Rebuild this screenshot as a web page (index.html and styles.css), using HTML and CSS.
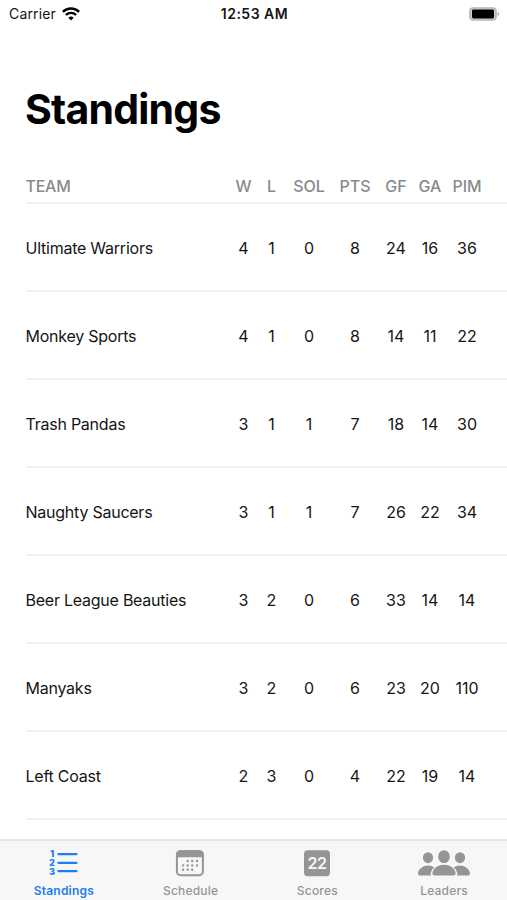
FILE: index.html
```html
<!DOCTYPE html>
<html lang="en">
<head>
    <meta charset="UTF-8">
    <title>Standings</title>
    <link rel="stylesheet" href="styles.css">
</head>
<body>
    <div class="status-bar">
        <div class="carrier">
            <span class="carrier-name">Carrier</span>
            <svg class="wifi" width="18" height="14" viewBox="0 0 18 14" fill="none" stroke="#000" stroke-width="2.4">
                <path d="M0.9 4.8a11.6 11.6 0 0 1 16.2 0"/>
                <path d="M3.9 8a7.3 7.3 0 0 1 10.2 0"/>
                <path d="M9 13.4l-2.6-2.7a3.7 3.7 0 0 1 5.2 0z" fill="#000" stroke="none"/>
            </svg>
        </div>
        <div class="time">12:53 AM</div>
        <div class="battery">
            <svg width="31" height="14" viewBox="0 0 31 14">
                <rect x="0.9" y="0.9" width="26.2" height="12.2" rx="3.4" fill="#ccc" stroke="#b4b4b4" stroke-width="1.4"/>
                <rect x="3" y="2.5" width="22" height="9" rx="1.4" fill="#000"/>
                <path d="M28.6 4.8c2.2.8 2.2 3.6 0 4.4z" fill="#b0b0b0"/>
            </svg>
        </div>
    </div>

    <h1>Standings</h1>

    <div class="standings">
        <div class="row header">
            <span class="team">TEAM</span><span>W</span><span>L</span><span>SOL</span><span>PTS</span><span>GF</span><span>GA</span><span>PIM</span>
        </div>
        <div class="row">
            <span class="team">Ultimate Warriors</span><span>4</span><span>1</span><span>0</span><span>8</span><span>24</span><span>16</span><span>36</span>
        </div>
        <div class="row">
            <span class="team">Monkey Sports</span><span>4</span><span>1</span><span>0</span><span>8</span><span>14</span><span>11</span><span>22</span>
        </div>
        <div class="row">
            <span class="team">Trash Pandas</span><span>3</span><span>1</span><span>1</span><span>7</span><span>18</span><span>14</span><span>30</span>
        </div>
        <div class="row">
            <span class="team">Naughty Saucers</span><span>3</span><span>1</span><span>1</span><span>7</span><span>26</span><span>22</span><span>34</span>
        </div>
        <div class="row">
            <span class="team">Beer League Beauties</span><span>3</span><span>2</span><span>0</span><span>6</span><span>33</span><span>14</span><span>14</span>
        </div>
        <div class="row">
            <span class="team">Manyaks</span><span>3</span><span>2</span><span>0</span><span>6</span><span>23</span><span>20</span><span>110</span>
        </div>
        <div class="row">
            <span class="team">Left Coast</span><span>2</span><span>3</span><span>0</span><span>4</span><span>22</span><span>19</span><span>14</span>
        </div>
    </div>

    <nav class="tab-bar">
        <a class="tab active">
            <svg width="30" height="28" viewBox="0 0 30 28">
                <path d="M10.4 4.2h18M10.4 12.8h18M10.4 21.2h18" stroke="currentColor" stroke-width="2.3" stroke-linecap="round"/>
                <g class="list-number">
                    <text x="4.2" y="7.3">1</text>
                    <text x="4.2" y="15.9">2</text>
                    <text x="4.2" y="24.5">3</text>
                </g>
            </svg>
            <span>Standings</span>
        </a>
        <a class="tab">
            <svg width="30" height="28" viewBox="0 0 30 28">
                <rect x="1.9" y="1.2" width="26" height="24" rx="3.6" fill="none" stroke="currentColor" stroke-width="2"/>
                <path d="M1 7.2V4.4A4.2 4.2 0 0 1 5.2.2h19.4a4.2 4.2 0 0 1 4.200 4.200v2.800z" fill="currentColor"/>
                <g stroke="currentColor" stroke-width="2.4" stroke-linecap="round">
                    <path d="M12.7 11h.01M17.2 11h.01M22 11h.01"/>
                    <path d="M8.1 15.4h.01M12.7 15.4h.01M17.2 15.4h.01M22 15.4h.01"/>
                    <path d="M8.1 19.8h.01M12.7 19.8h.01M17.2 19.8h.01"/>
                </g>
            </svg>
            <span>Schedule</span>
        </a>
        <a class="tab">
            <svg width="28" height="28" viewBox="0 0 28 28">
                <rect x="1" y="0.2" width="26" height="26" rx="3.6" fill="currentColor"/>
                <text class="score-number" x="14" y="19">22</text>
            </svg>
            <span>Scores</span>
        </a>
        <a class="tab">
            <svg width="54" height="28" viewBox="0 0 54 28" fill="currentColor">
                <ellipse cx="11" cy="7.7" rx="5.1" ry="5.5"/>
                <ellipse cx="43" cy="7.7" rx="5.1" ry="5.5"/>
                <ellipse cx="27" cy="6.6" rx="5.8" ry="6.400"/>
                <path d="M3 25.4c-1.400 0-2-.8-2-2 0-3.400 4-8 10-8 2.600 0 4.700.8 6.300 2-2.400 2-3.900 4.600-3.600 8z"/>
                <path d="M51 25.400c1.400 0 2-.8 2-2 0-3.400-4-8-10-8-2.600 0-4.700.8-6.300 2 2.400 2 3.900 4.600 3.600 8z"/>
                <path d="M18 25.400c-1.800 0-2.600-.8-2.600-2 0-3.600 4.200-8.700 11.600-8.700s11.600 5.100 11.600 8.700c0 1.200-.8 2-2.600 2z"/>
            </svg>
            <span>Leaders</span>
        </a>
    </nav>
</body>
</html>
```

FILE: styles.css
```css
* { box-sizing: border-box; }
body { margin: 0; height: 900px; display: flex; flex-direction: column; overflow: hidden; background: #fff; color: #151515; font-family: Inter, "Liberation Sans", sans-serif; }

.status-bar { display: grid; grid-template-columns: 1fr auto 1fr; align-items: center; height: 27px; padding: 0 7px 0 9px; }
.carrier { display: flex; align-items: center; gap: 6px; font-size: 14px; letter-spacing: 0.15px; }
.time { font-size: 14px; font-weight: 600; letter-spacing: 0.5px; }
.battery { display: flex; justify-content: flex-end; }

h1 { margin: 57px 0 0 25px; height: 50px; line-height: 50px; font-size: 41px; font-weight: 700; letter-spacing: -0.8px; color: #000; }

.standings { flex: 1; padding: 35px 0 0 26px; }
.row { display: grid; grid-template-columns: 203.5px 28px 28px 47px 45px 37px 31px 43px; align-items: center; height: 88px; padding-top: 2px; border-bottom: 2px solid #f2f2f2; font-size: 16px; text-align: center; white-space: nowrap; }
.team { margin-left: -0.5px; text-align: left; letter-spacing: -0.24px; }
.header { height: 35px; padding-top: 0; color: #8a8a8d; font-weight: 500; }

.tab-bar { display: flex; height: 61px; background: #f7f7f7; border-top: 2px solid #e6e6e6; }
.tab { flex: 1; display: flex; flex-direction: column; align-items: center; padding-top: 9px; color: #959595; font-size: 12px; font-weight: 500; letter-spacing: 0.2px; }
.tab span { margin: 5px 0 0 1px; line-height: 16px; }
.active { color: #1c7ff0; font-weight: 600; }
.list-number { fill: currentColor; font-size: 8.5px; font-weight: 900; text-anchor: middle; }
.score-number { fill: #f7f7f7; font-size: 16px; font-weight: 600; text-anchor: middle; letter-spacing: -0.5px; }
```
